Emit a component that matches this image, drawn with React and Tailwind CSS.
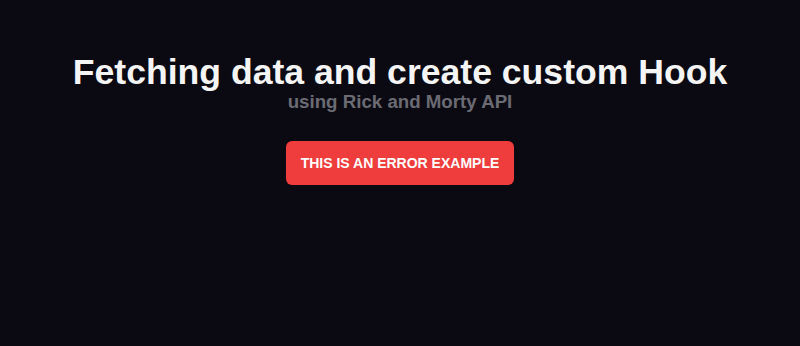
export default function App() {
  return (
    <div className="min-h-[346px] w-full bg-[#0b0a13] font-['Liberation_Sans',Arial,sans-serif] text-center">
      <div className="flex flex-col items-center pt-[52px]">
        <h1 className="text-[35.6px] font-bold leading-10 text-[#f5f5f5]">Fetching data and create custom Hook</h1>
        <h2 className="text-[18.7px] font-bold leading-7 text-[#6b6b73] -mt-1">using Rick and Morty API</h2>
        <button className="mt-[25px] h-[44px] rounded-md bg-[#ef3c3c] px-[15px] text-sm font-bold uppercase text-white">
          This is an error example
        </button>
      </div>
    </div>
  )
}
